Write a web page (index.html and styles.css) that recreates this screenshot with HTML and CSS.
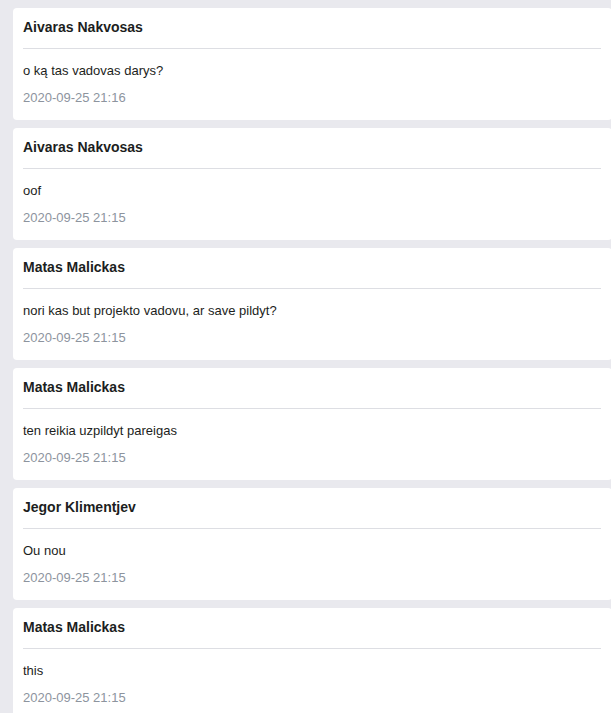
FILE: index.html
```html
<!DOCTYPE html>
<html>
<head>
<meta charset="utf-8">
<link rel="stylesheet" href="styles.css">
</head>
<body>
<div class="feed">
  <div class="card">
    <div class="name">Aivaras Nakvosas</div>
    <div class="divider"></div>
    <div class="msg">o ką tas vadovas darys?</div>
    <div class="time">2020-09-25 21:16</div>
  </div>
  <div class="card">
    <div class="name">Aivaras Nakvosas</div>
    <div class="divider"></div>
    <div class="msg">oof</div>
    <div class="time">2020-09-25 21:15</div>
  </div>
  <div class="card">
    <div class="name">Matas Malickas</div>
    <div class="divider"></div>
    <div class="msg">nori kas but projekto vadovu, ar save pildyt?</div>
    <div class="time">2020-09-25 21:15</div>
  </div>
  <div class="card">
    <div class="name">Matas Malickas</div>
    <div class="divider"></div>
    <div class="msg">ten reikia uzpildyt pareigas</div>
    <div class="time">2020-09-25 21:15</div>
  </div>
  <div class="card">
    <div class="name">Jegor Klimentjev</div>
    <div class="divider"></div>
    <div class="msg">Ou nou</div>
    <div class="time">2020-09-25 21:15</div>
  </div>
  <div class="card">
    <div class="name">Matas Malickas</div>
    <div class="divider"></div>
    <div class="msg">this</div>
    <div class="time">2020-09-25 21:15</div>
  </div>
</div>
</body>
</html>
```
FILE: styles.css
```css
html, body {
  margin: 0;
  padding: 0;
  background: #e9e9ee;
  font-family: "Liberation Sans", Arial, sans-serif;
  overflow: hidden;
}
.feed {
  display: flex;
  flex-direction: column;
  gap: 8px;
  padding: 8px 0 0 13px;
}
.card {
  width: 599px;
  box-sizing: border-box;
  background: #ffffff;
  border-radius: 4px;
  padding: 9px 11px 12px 10px;
  display: flex;
  flex-direction: column;
}
.name {
  font-size: 14px;
  font-weight: bold;
  line-height: 20px;
  color: #1c1e21;
}
.divider {
  height: 1px;
  background: #dddee3;
  margin: 11px 0 12px;
}
.msg {
  font-size: 13px;
  line-height: 20px;
  color: #1c1e21;
}
.time {
  font-size: 13px;
  line-height: 20px;
  color: #8d949e;
  margin-top: 7px;
}
```
